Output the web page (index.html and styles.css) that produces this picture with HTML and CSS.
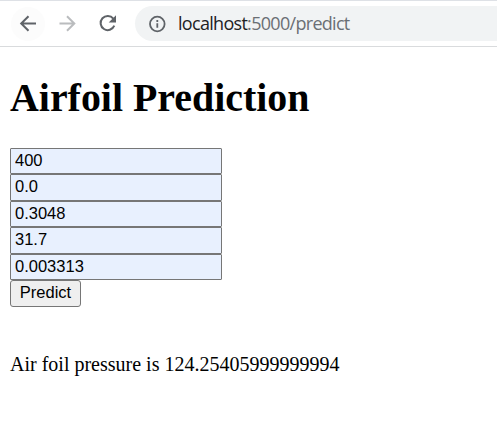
FILE: index.html
```html
<!DOCTYPE html>
<html lang="en">
<head>
<meta charset="utf-8">
<title>Airfoil Prediction</title>
<link rel="stylesheet" href="styles.css">
</head>
<body>
<header class="toolbar">
  <span class="nav nav-back"><svg viewBox="0 0 34 34"><path d="M25 16.5H10.5M17.5 9.2 10.2 16.5l7.3 7.3"/></svg></span>
  <span class="nav nav-forward"><svg viewBox="0 0 34 34"><path d="M8.5 16.5H23M16 9.2l7.3 7.3-7.3 7.3"/></svg></span>
  <span class="nav nav-reload"><svg viewBox="0 0 34 34"><path d="M22.3 11.6A7.1 7.1 0 1 0 23.3 18.7"/><path class="solid" d="M25 8.2v7.3h-7.3z"/></svg></span>
  <div class="address">
    <svg class="info" viewBox="0 0 18 18"><circle cx="9.3" cy="9" r="7.3"/><path d="M9.3 8.2v4.6M9.3 5v2"/></svg>
    <span class="url"><span class="host">localhost</span>:5000/predict</span>
  </div>
</header>
<main class="page">
  <h1>Airfoil Prediction</h1>
  <form class="form">
    <input type="text" value="400">
    <input class="tall" type="text" value="0.0">
    <input type="text" value="0.3048">
    <input class="tall" type="text" value="31.7">
    <input type="text" value="0.003313">
    <button type="button">Predict</button>
  </form>
  <p class="result">Air foil pressure is 124.25405999999994</p>
</main>
</body>
</html>
```
FILE: styles.css
```css
* { box-sizing: border-box; }
body {
  margin: 0;
  background: #fff;
  color: #000;
  font-family: "Liberation Serif", serif;
  font-size: 20px;
  overflow: hidden;
}
.toolbar {
  display: flex;
  align-items: center;
  height: 47px;
  padding-left: 11px;
  border-top: 1px solid #dee1e6;
  border-bottom: 1px solid #d9dbdd;
}
.nav {
  width: 34px;
  height: 34px;
  margin-right: 6px;
  border-radius: 50%;
}
.nav-back { background: #fcfcfc; }
.nav svg { display: block; }
.nav path {
  fill: none;
  stroke: #5f6368;
  stroke-width: 2;
}
.nav-forward path { stroke: #babcbe; }
.nav .solid { fill: #5f6368; stroke: none; }
.nav-reload { margin-right: 10px; }
.address {
  display: flex;
  align-items: center;
  flex: 1;
  height: 35px;
  padding-left: 13px;
  border-radius: 18px 0 0 18px;
  background: #f1f3f4;
}
.info {
  width: 18px;
  height: 18px;
  margin-right: 12px;
  fill: none;
  stroke: #5f6368;
  stroke-width: 1.8;
}
.url {
  color: #6b6f74;
  font: 18px/24px "Open Sans", sans-serif;
  letter-spacing: -0.7px;
  padding-bottom: 1px;
}
.host { color: #202124; }
.page { padding: 0 10px; }
h1 {
  margin: 28px 0 27px;
  font-size: 39.9px;
  line-height: 46px;
}
.form {
  display: flex;
  flex-direction: column;
  align-items: flex-start;
}
.form input {
  width: 212px;
  height: 26px;
  padding: 0 4px 2px;
  border: 1px solid #767676;
  border-radius: 1px;
  background: #e8f0fe;
  color: #000;
  font: 16.5px/22px "Liberation Sans", sans-serif;
}
.form .tall { height: 27px; padding-bottom: 3px; }
.form button {
  width: 71px;
  height: 27px;
  padding: 0 0 3px;
  border: 1px solid #767676;
  border-radius: 3px;
  background: #efefef;
  color: #000;
  font: 16.5px/22px "Liberation Sans", sans-serif;
}
.result {
  margin: 45px 0 0;
  line-height: 24px;
}
```
